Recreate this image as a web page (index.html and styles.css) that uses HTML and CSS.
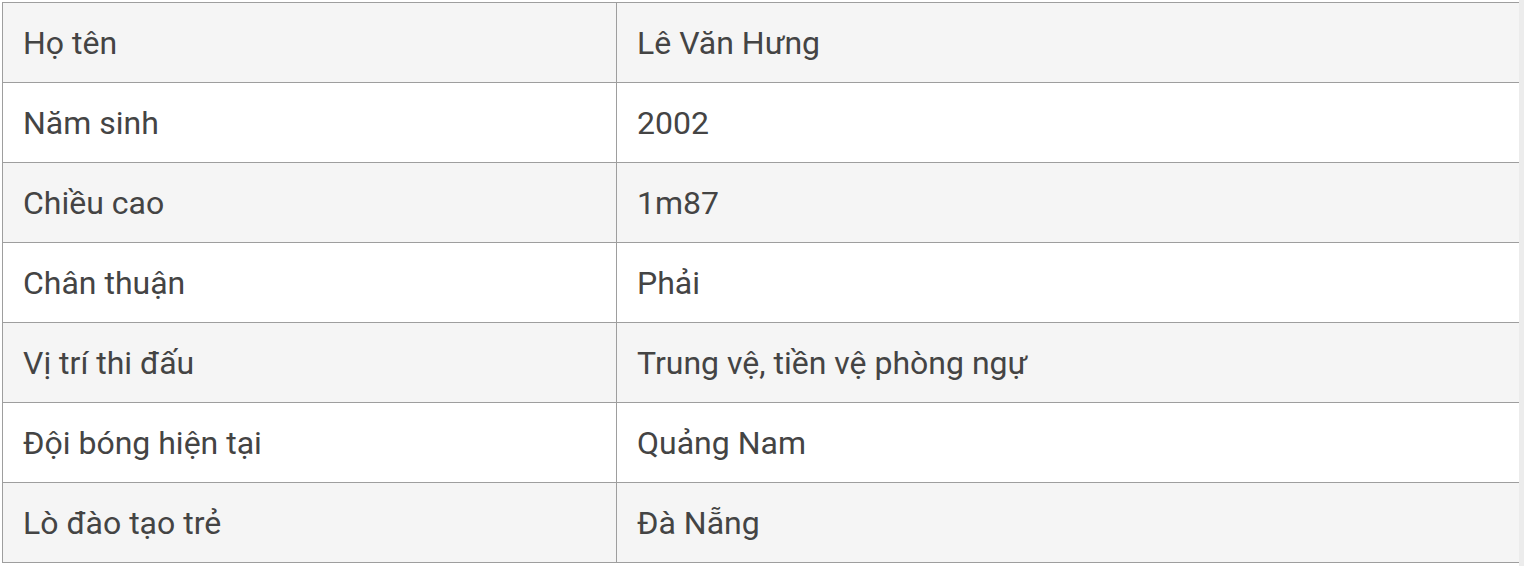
FILE: index.html
```html
<!DOCTYPE html>
<html lang="vi">
<head>
<meta charset="utf-8">
<link rel="stylesheet" href="styles.css">
</head>
<body>
<div class="page">
  <table class="info">
    <tbody>
      <tr><td class="label">Họ tên</td><td class="value">Lê Văn Hưng</td></tr>
      <tr><td class="label">Năm sinh</td><td class="value">2002</td></tr>
      <tr><td class="label">Chiều cao</td><td class="value">1m87</td></tr>
      <tr><td class="label">Chân thuận</td><td class="value">Phải</td></tr>
      <tr><td class="label">Vị trí thi đấu</td><td class="value">Trung vệ, tiền vệ phòng ngự</td></tr>
      <tr><td class="label">Đội bóng hiện tại</td><td class="value">Quảng Nam</td></tr>
      <tr><td class="label">Lò đào tạo trẻ</td><td class="value">Đà Nẵng</td></tr>
    </tbody>
  </table>
  <div class="edge"></div>
</div>
</body>
</html>
```

FILE: styles.css
```css
html, body {
  margin: 0;
  padding: 0;
  background: #ffffff;
}
.page {
  display: flex;
  align-items: stretch;
  height: 566px;
  padding: 2px 0 0 2px;
  box-sizing: border-box;
}
.info {
  border-collapse: collapse;
  width: 1517px;
  height: 561px;
  font-family: Roboto, "Liberation Sans", sans-serif;
  font-size: 32px;
  color: #444444;
  flex: none;
}
.info tr {
  height: 80px;
}
.info tr:nth-child(odd) {
  background: #f5f5f5;
}
.info tr:nth-child(even) {
  background: #ffffff;
}
.info td {
  border: 1px solid #9e9e9e;
  padding: 0 20px;
  vertical-align: middle;
  line-height: 1;
}
.info td.value {
  border-right: none;
}
.info td.label {
  width: 573px;
}
.edge {
  flex: 1;
  background: #ececec;
  margin-top: -2px;
}
```
